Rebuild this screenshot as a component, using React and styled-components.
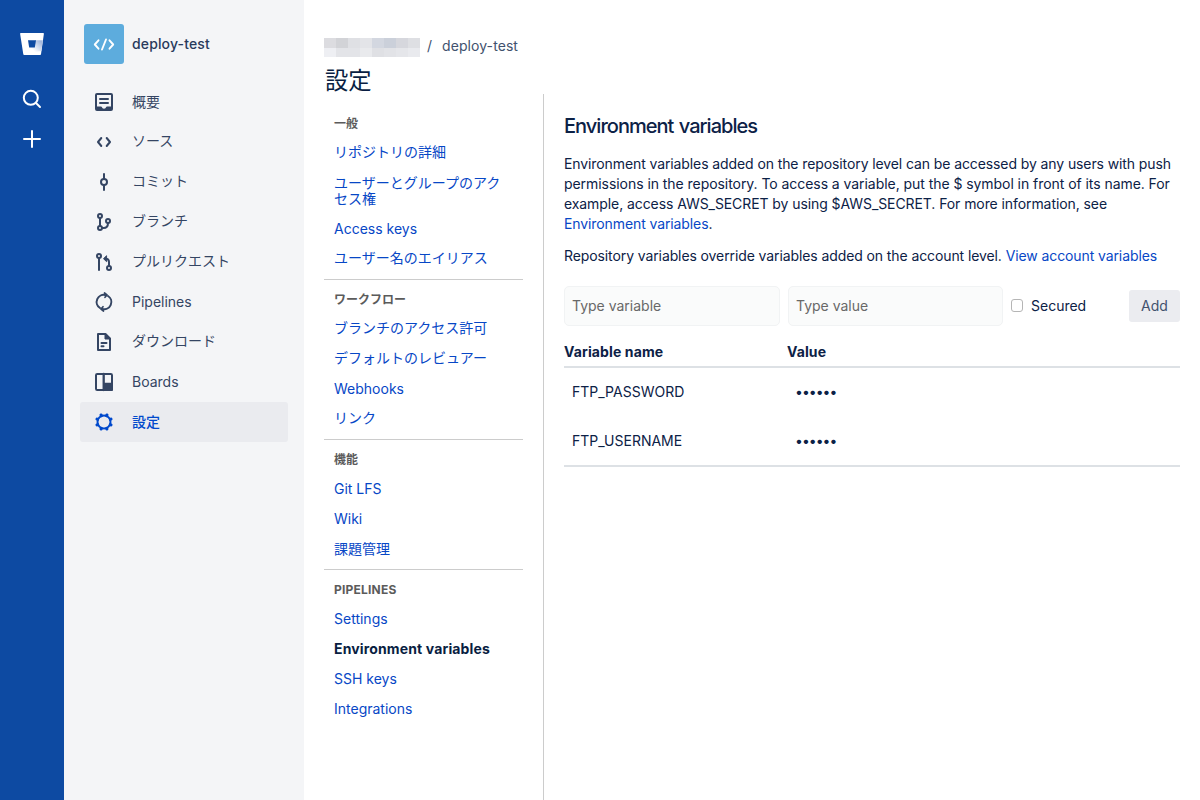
import React from "react";
import styled, { createGlobalStyle } from "styled-components";

const Global = createGlobalStyle`
  * { box-sizing: border-box; }
  html, body { margin: 0; padding: 0; background: #fff; }
  body {
    font-family: Inter, "Noto Sans CJK JP", sans-serif;
    font-size: 14px;
    line-height: 20px;
    color: #0c2146;
    overflow: hidden;
  }
  a { color: #0747c6; text-decoration: none; }
`;

const Page = styled.div`
  display: flex;
  height: 800px;
  width: 1200px;
`;

const GlobalNav = styled.nav`
  width: 64px;
  flex: none;
  background: #0d4aa2;
  display: flex;
  flex-direction: column;
  align-items: center;
  padding-top: 24px;
`;

const GlobalItem = styled.a`
  display: flex;
  align-items: center;
  justify-content: center;
  width: 40px;
  height: 40px;
  margin-bottom: ${(p) => p.$gap || 0}px;
`;

const RepoNav = styled.aside`
  width: 240px;
  flex: none;
  background: #f4f5f7;
  padding: 24px 16px 0;
`;

const RepoHeader = styled.div`
  display: flex;
  align-items: center;
  gap: 8px;
  height: 40px;
  padding-left: 4px;
  margin-bottom: 18px;
  font-weight: 500;
  color: #283a5c;
`;

const Avatar = styled.span`
  width: 40px;
  height: 40px;
  border-radius: 3px;
  background: #5dacdd;
  display: flex;
`;

const NavItem = styled.a`
  display: flex;
  align-items: center;
  gap: 16px;
  height: 40px;
  padding-left: 12px;
  border-radius: 3px;
  && { color: ${(p) => (p.$active ? "#0049cc" : "#344563")}; }
  background: ${(p) => (p.$active ? "#eaebef" : "transparent")};
  font-weight: ${(p) => (p.$active ? 500 : 400)};
`;

const Text = styled.span`
  letter-spacing: ${(p) => p.$ls || 0}px;
  padding-bottom: ${(p) => (p.$raised ? 2 : 0)}px;
`;

const Content = styled.main`
  flex: 1;
  display: flex;
  padding-left: 20px;
`;

const Side = styled.div`
  width: 219px;
  flex: none;
  padding-top: 36px;
`;

const Crumbs = styled.div`
  display: flex;
  align-items: center;
  height: 20px;
  color: #42526e;
  white-space: nowrap;
`;

const Mosaic = styled.span`
  display: grid;
  grid-template-columns: repeat(8, 12px);
  grid-template-rows: 10px 9px;
  margin: 3px 7px 0 0;
`;

const Tile = styled.i`
  background: ${(p) => p.$c};
`;

const Slash = styled.span`
  width: 15px;
`;

const Title = styled.h1`
  margin: 11px 0 13px;
  padding-left: 1px;
  font-size: 23.300px;
  line-height: 28px;
  font-weight: 400;
  color: #091e42;
`;

const Group = styled.section`
  width: 199px;
  border-top: 1px solid ${(p) => (p.$first ? "transparent" : "#ccc")};
  padding: ${(p) => (p.$first ? 0 : 4)}px 0 5px;
  margin-top: ${(p) => (p.$first ? -1 : 0)}px;
`;

const GroupTitle = styled.h2`
  margin: 0;
  padding: 8px 10px 6px;
  font-size: 12px;
  line-height: 16px;
  font-weight: 700;
  color: #5b5b5b;
  letter-spacing: ${(p) => (p.$latin ? 0.2 : 0)}px;
`;

const GroupLink = styled.a`
  display: block;
  padding: ${(p) => (p.$raised ? "6px 10px 8px" : "7px 10px")};
  line-height: 16px;
  && { color: ${(p) => (p.$active ? "#091e42" : "#0747c6")}; }
  font-weight: ${(p) => (p.$active ? 700 : 400)};
  letter-spacing: ${(p) => (p.$active ? 0.14 : 0)}px;
`;

const Panel = styled.section`
  flex: 1;
  margin-top: 94px;
  border-left: 1px solid #ccc;
  padding: 20px 20px 0;
`;

const PanelTitle = styled.h2`
  margin: 0 0 16px;
  font-size: 20px;
  line-height: 24px;
  font-weight: 500;
  letter-spacing: -0.970px;
  word-spacing: 1px;
`;

const Para = styled.p`
  margin: 0 0 12px;
  white-space: nowrap;
`;

const Line = styled.span`
  display: block;
  letter-spacing: ${(p) => p.$ls}px;
`;

const Form = styled.div`
  display: flex;
  align-items: center;
  margin-top: 20px;
  height: 40px;
`;

const Field = styled.input`
  width: ${(p) => p.$w}px;
  height: 40px;
  margin-right: 8px;
  border: 1px solid #f1f3f4;
  border-radius: 5px;
  background: #fafbfb;
  padding: 0 7px 2px;
  font: inherit;
  &::placeholder { color: #686868; opacity: 1; }
`;

const Check = styled.span`
  width: 12px;
  height: 13px;
  border: 1px solid #b5b5b5;
  border-radius: 3px;
  background: #fff;
  margin: 0 8px 1px 0;
`;

const AddButton = styled.button`
  margin-left: auto;
  width: 51px;
  height: 32px;
  border: 0;
  border-radius: 3px;
  background: #ebecf0;
  color: #42526e;
  font: inherit;
  padding: 0;
`;

const Table = styled.div`
  margin-top: 16px;
  border-bottom: 2px solid #dde1e5;
`;

const Row = styled.div`
  display: grid;
  grid-template-columns: 224px 1fr;
  align-items: center;
  height: ${(p) => p.$h}px;
  padding-left: 8px;
`;

const HeadRow = styled(Row)`
  grid-template-columns: 223px 1fr;
  height: 26px;
  padding: 0 0 6px;
  border-bottom: 2px solid #dde1e5;
  font-weight: 700;
`;

const Dots = styled.span`
  letter-spacing: -0.970px;
  margin-left: -1px;
`;

const Svg = ({ children }) => (
  <svg width="24" height="24" viewBox="0 0 24 24" fill="none" stroke="currentColor" strokeWidth="2" strokeLinecap="round" strokeLinejoin="round">
    {children}
  </svg>
);

const icons = {
  overview: (
    <>
      <rect x="4" y="4" width="16" height="16" rx="1" />
      <path d="M4 16.500h5q.6 0 .8.600a2.300 2.300 0 0 0 4.400 0q.2-.6.800-.6h5V20H4z" fill="currentColor" stroke="none" />
      <path d="M8 9h8M8 13h8" />
    </>
  ),
  source: <path d="M9.300 8 6 12l3.300 4M14.700 8 18 12l-3.300 4" />,
  commit: (
    <>
      <circle cx="12" cy="12" r="3" />
      <path d="M12 4v5M12 15v5" />
    </>
  ),
  branch: (
    <>
      <circle cx="8" cy="6" r="2" />
      <circle cx="8" cy="18" r="2" />
      <circle cx="16" cy="11" r="2" />
      <path d="M8 8v8M10 18h1.500q4.500 0 4.500-5" />
    </>
  ),
  pull: (
    <>
      <circle cx="7" cy="6" r="2" />
      <path d="M7 8v12" />
      <circle cx="17" cy="18" r="2" />
      <path d="M17 16v-4q0-3.300-3.500-3.300" />
      <path d="M14.300 6 11.500 8.700l2.800 2.700z" fill="currentColor" strokeWidth="1" />
    </>
  ),
  pipelines: (
    <>
      <path d="M8 18a7.100 7.100 0 0 1 5.500-12.900" />
      <path d="M16 6a7.100 7.100 0 0 1-5.500 12.900" />
      <path d="M12.500 3 15 5l-2 2.300M11.500 21 9 19l2-2.300" strokeWidth="1.700" />
    </>
  ),
  download: (
    <>
      <path d="M6 4h7.500L18 8.500V20H6z" />
      <path d="M13 4v5h5z" fill="currentColor" strokeWidth="1" />
      <path d="M9.500 13h5M9.500 16.300h2" />
    </>
  ),
  boards: (
    <>
      <rect x="4" y="4" width="16" height="16" rx="1.200" />
      <path d="M11.700 4v16" strokeWidth="2.300" />
      <path d="M12 13.700h8V20h-8z" fill="currentColor" />
    </>
  ),
  settings: (
    <>
      <circle cx="12" cy="12" r="6.500" strokeWidth="2" />
      {[22.5, 67.5, 112.5, 157.5, 202.5, 247.5, 292.5, 337.5].map((a) => (
        <path key={a} d="M12 5V4.500" strokeWidth="3.200" transform={`rotate(${a} 12 12)`} />
      ))}
    </>
  ),
};

// Short kana labels sit one pixel higher than Latin and all-kanji ones.
const isRaised = (s) => /[\u3040-\u30ff]/.test(s) && s.length < 13;
const isLatin = (s) => /^[\x00-\x7f]+$/.test(s);

const navItems = [
  ["overview", "概要"],
  ["source", "ソース"],
  ["commit", "コミット"],
  ["branch", "ブランチ"],
  ["pull", "プルリクエスト"],
  ["pipelines", "Pipelines"],
  ["download", "ダウンロード"],
  ["boards", "Boards"],
  ["settings", "設定"],
];

const groups = [
  ["一般", ["リポジトリの詳細", "ユーザーとグループのアクセス権", "Access keys", "ユーザー名のエイリアス"]],
  ["ワークフロー", ["ブランチのアクセス許可", "デフォルトのレビュアー", "Webhooks", "リンク"]],
  ["機能", ["Git LFS", "Wiki", "課題管理"]],
  ["PIPELINES", ["Settings", "Environment variables", "SSH keys", "Integrations"]],
];

const tiles = [
  "#dcdce0", "#d2d3d7", "#dfe0e4", "#e3e4e8", "#d3d7e0", "#cbd0da", "#d6d7dd", "#dedfe3",
  "#eeeff3", "#e3e4e8", "#e3e4e8", "#e9eaed", "#dfe0e4", "#e2e3e7", "#e5e6ea", "#e9eaee",
];

export default function App() {
  return (
    <>
      <Global />
      <Page>
        <GlobalNav>
          <GlobalItem $gap={15}>
            <svg width="24" height="24" viewBox="0 0 24 24">
              <defs>
                <linearGradient id="fade" x1="1" y1="0.1" x2="0.25" y2="0.8">
                  <stop offset="0.1" stopColor="#a3b8dd" />
                  <stop offset="1" stopColor="#fff" />
                </linearGradient>
              </defs>
              <path d="M.8 1h22.400q.8 0 .7.800L21 22.200q-.1.800-.9.800H4.200q-.8 0-.9-.8L.1 1.800Q0 1 .8 1z" fill="#fff" />
              <path d="M15.500 8.300h7.300L21.300 19 15 20 9.200 15.500z" fill="url(#fade)" />
              <path d="M8 8.300h8l-1.200 7.200H9.200z" fill="#0d4aa2" />
            </svg>
          </GlobalItem>
          <GlobalItem>
            <svg width="24" height="24" viewBox="0 0 24 24" fill="none" stroke="#fff" strokeWidth="2" strokeLinecap="round">
              <circle cx="10.800" cy="10.800" r="7" />
              <path d="m16 16 4 4" />
            </svg>
          </GlobalItem>
          <GlobalItem>
            <svg width="24" height="24" viewBox="0 0 24 24" fill="none" stroke="#fff" strokeWidth="2" strokeLinecap="round">
              <path d="M12 4v16M4 12h16" />
            </svg>
          </GlobalItem>
        </GlobalNav>

        <RepoNav>
          <RepoHeader>
            <Avatar>
              <svg width="40" height="40" viewBox="0 0 40 40" fill="none" stroke="#fff" strokeWidth="1.900" strokeLinecap="round" strokeLinejoin="round">
                <path d="m14.500 16.300-3.700 4.200 3.700 4.200M25.500 16.300l3.700 4.200-3.700 4.200M22 15.500l-4 10" />
              </svg>
            </Avatar>
            <Text $ls={0.14}>deploy-test</Text>
          </RepoHeader>
          {navItems.map(([icon, label]) => (
            <NavItem key={icon} $active={icon === "settings"}>
              <Svg>{icons[icon]}</Svg>
              <Text $raised={isRaised(label)}>{label}</Text>
            </NavItem>
          ))}
        </RepoNav>

        <Content>
          <Side>
            <Crumbs>
              <Mosaic>
                {tiles.map((c, i) => (
                  <Tile key={i} $c={c} />
                ))}
              </Mosaic>
              <Slash>/</Slash>
              <Text $ls={0.08}>deploy-test</Text>
            </Crumbs>
            <Title>設定</Title>
            {groups.map(([title, links], i) => (
              <Group key={title} $first={i === 0}>
                <GroupTitle $latin={isLatin(title)}>{title}</GroupTitle>
                {links.map((l) => (
                  <GroupLink key={l} $raised={isRaised(l)} $active={l === "Environment variables"}>
                    {l}
                  </GroupLink>
                ))}
              </Group>
            ))}
          </Side>

          <Panel>
            <PanelTitle>Environment variables</PanelTitle>
            <Para>
              <Line $ls={-0.1}>Environment variables added on the repository level can be accessed by any users with push</Line>
              <Line $ls={-0.055}>permissions in the repository. To access a variable, put the $ symbol in front of its name. For</Line>
              <Line $ls={-0.08}>example, access AWS_SECRET by using $AWS_SECRET. For more information, see</Line>
              <Line $ls={-0.1}>
                <a>Environment variables</a>.
              </Line>
            </Para>
            <Para>
              <Line $ls={-0.1}>
                Repository variables override variables added on the account level. <a>View account variables</a>
              </Line>
            </Para>
            <Form>
              <Field $w={216} placeholder="Type variable" />
              <Field $w={215} placeholder="Type value" />
              <Check />
              <Text>Secured</Text>
              <AddButton>Add</AddButton>
            </Form>
            <Table>
              <HeadRow>
                <Text $ls={0.12}>Variable name</Text>
                <Text $ls={0.1}>Value</Text>
              </HeadRow>
              <Row $h={48}>
                <Text>FTP_PASSWORD</Text>
                <Dots>••••••</Dots>
              </Row>
              <Row $h={49}>
                <Text>FTP_USERNAME</Text>
                <Dots>••••••</Dots>
              </Row>
            </Table>
          </Panel>
        </Content>
      </Page>
    </>
  );
}
